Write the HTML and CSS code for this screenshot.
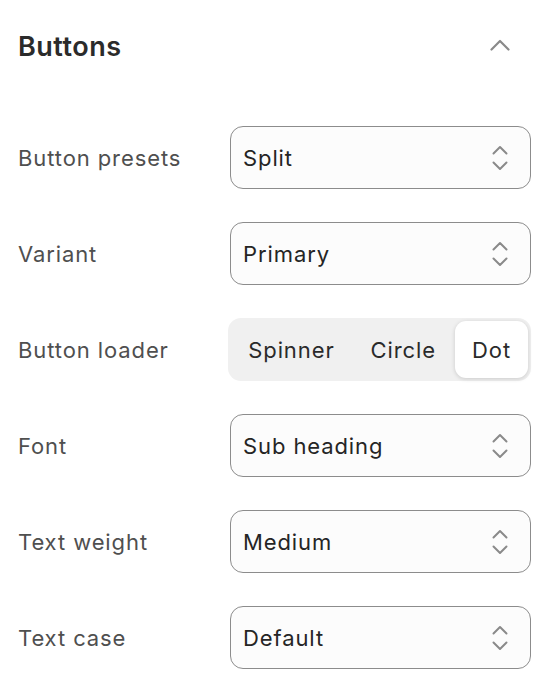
FILE: index.html
```html
<!DOCTYPE html>
<html lang="en">
<head>
    <meta charset="UTF-8">
    <meta name="viewport" content="width=device-width, initial-scale=1.0">
    <title>Buttons</title>
    <link rel="stylesheet" href="styles.css">
</head>
<body>
    <section class="panel">
        <div class="panel-head">
            <h2>Buttons</h2>
            <svg class="collapse" width="20" height="12" viewBox="0 0 20 12"><path d="M1.5 10.5 L10 2 L18.5 10.5" fill="none" stroke="#8a8a8a" stroke-width="2.2" stroke-linecap="round" stroke-linejoin="round"/></svg>
        </div>

        <div class="rows">
            <div class="row">
                <label>Button presets</label>
                <div class="select"><span>Split</span>
                    <svg class="updown" width="16" height="26" viewBox="0 0 16 26"><path d="M1.5 8.5 L8 2 L14.5 8.5 M1.5 17.5 L8 24 L14.5 17.5" fill="none" stroke="#8a8a8a" stroke-width="2" stroke-linecap="round" stroke-linejoin="round"/></svg>
                </div>
            </div>
            <div class="row">
                <label>Variant</label>
                <div class="select"><span>Primary</span>
                    <svg class="updown" width="16" height="26" viewBox="0 0 16 26"><path d="M1.5 8.5 L8 2 L14.5 8.5 M1.5 17.5 L8 24 L14.5 17.5" fill="none" stroke="#8a8a8a" stroke-width="2" stroke-linecap="round" stroke-linejoin="round"/></svg>
                </div>
            </div>
            <div class="row">
                <label>Button loader</label>
                <div class="segmented">
                    <span class="seg">Spinner</span>
                    <span class="seg">Circle</span>
                    <span class="seg active">Dot</span>
                </div>
            </div>
            <div class="row">
                <label>Font</label>
                <div class="select"><span>Sub heading</span>
                    <svg class="updown" width="16" height="26" viewBox="0 0 16 26"><path d="M1.5 8.5 L8 2 L14.5 8.5 M1.5 17.5 L8 24 L14.5 17.5" fill="none" stroke="#8a8a8a" stroke-width="2" stroke-linecap="round" stroke-linejoin="round"/></svg>
                </div>
            </div>
            <div class="row">
                <label>Text weight</label>
                <div class="select"><span>Medium</span>
                    <svg class="updown" width="16" height="26" viewBox="0 0 16 26"><path d="M1.5 8.5 L8 2 L14.5 8.5 M1.5 17.5 L8 24 L14.5 17.5" fill="none" stroke="#8a8a8a" stroke-width="2" stroke-linecap="round" stroke-linejoin="round"/></svg>
                </div>
            </div>
            <div class="row">
                <label>Text case</label>
                <div class="select"><span>Default</span>
                    <svg class="updown" width="16" height="26" viewBox="0 0 16 26"><path d="M1.5 8.5 L8 2 L14.5 8.5 M1.5 17.5 L8 24 L14.5 17.5" fill="none" stroke="#8a8a8a" stroke-width="2" stroke-linecap="round" stroke-linejoin="round"/></svg>
                </div>
            </div>
        </div>
    </section>
</body>
</html>
```

FILE: styles.css
```css
body { margin: 0; background: #fff; font-family: Inter, "Noto Sans", sans-serif; color: #222; }
.panel { padding: 26px 27px 0 18px; }
.panel-head { display: flex; align-items: center; justify-content: space-between; height: 40px; }
.panel-head h2 { margin: 0; font-size: 27px; font-weight: 600; color: #2b2b2b; letter-spacing: 0.5px; }
.collapse { margin-right: 21px; margin-top: -2px; }
.rows { display: flex; flex-direction: column; gap: 33px; margin-top: 60px; }
.row { display: flex; align-items: center; height: 63px; }
.row label { width: 212px; font-size: 22px; letter-spacing: 0.9px; color: #4f4f4f; }
.select { flex: 1; height: 63px; box-sizing: border-box; border: 1px solid #8c8c8c; border-radius: 13px; background: #fcfcfc; display: flex; align-items: center; justify-content: space-between; padding: 0 22px 0 12px; font-size: 22px; letter-spacing: 0.9px; color: #252525; }
.updown { display: block; }
.segmented { display: flex; align-items: stretch; height: 63px; box-sizing: border-box; padding: 3px; background: #f0f0f0; border-radius: 13px; gap: 2px; }
.seg { display: flex; align-items: center; padding: 0 17px; font-size: 22px; letter-spacing: 0.9px; color: #2a2a2a; border-radius: 11px; }
.seg.active { background: #fff; box-shadow: 0 1px 4px rgba(0, 0, 0, 0.16); }
```
